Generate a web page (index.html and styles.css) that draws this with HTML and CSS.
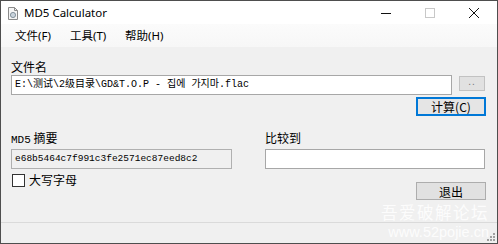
FILE: index.html
```html
<!DOCTYPE html>
<html lang="zh-CN">
<head>
<meta charset="utf-8">
<title>MD5 Calculator</title>
<link rel="stylesheet" href="styles.css">
</head>
<body>
<div class="window">
  <div class="titlebar">
    <svg class="app-icon" width="12" height="13" viewBox="0 0 12 13">
      <path d="M1.5 0.5h6l3 3v9h-9z" fill="#f4f4f4" stroke="#8a8a8a"/>
      <path d="M7.5 0.5v3h3" fill="none" stroke="#8a8a8a"/>
      <circle cx="6" cy="8" r="2.6" fill="#c9d3dc" stroke="#6f7f8c" stroke-width="0.8"/>
    </svg>
    <span class="title">MD5 Calculator</span>
    <div class="controls">
      <span class="ctl"><svg width="10" height="10" viewBox="0 0 10 10"><path d="M0 5.5h10" stroke="#111" stroke-width="1"/></svg></span>
      <span class="ctl"><svg width="10" height="10" viewBox="0 0 10 10"><rect x="0.5" y="0.5" width="9" height="9" fill="none" stroke="#c8c8c8"/></svg></span>
      <span class="ctl"><svg width="10" height="10" viewBox="0 0 10 10"><path d="M0 0L10 10M10 0L0 10" stroke="#111" stroke-width="1"/></svg></span>
    </div>
  </div>
  <div class="menubar">
    <span class="menu-item">文件(F)</span>
    <span class="menu-item">工具(T)</span>
    <span class="menu-item">帮助(H)</span>
  </div>
  <div class="content">
    <div class="label">文件名</div>
    <div class="file-row">
      <div class="field file-field mono">E:\测试\2级目录\GD&amp;T.O.P - 집에 가지마.flac</div>
      <div class="btn btn-browse">..</div>
    </div>
    <div class="calc-row">
      <div class="btn btn-wide btn-default">计算(C)</div>
    </div>
    <div class="columns">
      <div class="col col-left">
        <div class="label"><span class="mono-label">MD5</span> 摘要</div>
        <div class="field md5-field mono">e68b5464c7f991c3fe2571ec87eed8c2</div>
        <div class="check-row">
          <span class="checkbox"></span>
          <span class="check-label">大写字母</span>
        </div>
      </div>
      <div class="col col-right">
        <div class="label">比较到</div>
        <div class="field compare-field"></div>
        <div class="exit-row">
          <div class="btn btn-wide">退出</div>
        </div>
      </div>
    </div>
  </div>
  <div class="statusbar">
    <svg class="grip" width="9" height="9" viewBox="0 0 9 9">
      <g fill="#a0a0a0">
        <rect x="6" y="0" width="2" height="2"/>
        <rect x="3" y="3" width="2" height="2"/><rect x="6" y="3" width="2" height="2"/>
        <rect x="0" y="6" width="2" height="2"/><rect x="3" y="6" width="2" height="2"/><rect x="6" y="6" width="2" height="2"/>
      </g>
    </svg>
  </div>
  <div class="watermark">
    <div class="wm-cn">吾爱破解论坛</div>
    <div class="wm-url">www.52pojie.cn</div>
  </div>
</div>
</body>
</html>
```
FILE: styles.css
```css
html, body {
  margin: 0;
  padding: 0;
}
body {
  width: 498px;
  height: 244px;
  overflow: hidden;
  font-family: "Noto Sans", "Noto Sans CJK SC", sans-serif;
  font-size: 12px;
  color: #000;
}
.window {
  position: relative;
  box-sizing: border-box;
  width: 498px;
  height: 244px;
  border: 1px solid #4e4e4e;
  background: #f0f0f0;
  display: flex;
  flex-direction: column;
}
.titlebar {
  height: 23px;
  background: #fff;
  display: flex;
  align-items: center;
  padding-left: 6px;
}
.app-icon {
  margin-top: 1px;
}
.title {
  margin-left: 5px;
  font-size: 11.5px;
  line-height: 14px;
  color: #000;
}
.controls {
  margin-left: auto;
  display: flex;
  height: 100%;
}
.ctl {
  width: 43px;
  display: flex;
  align-items: center;
  justify-content: center;
}
.controls .ctl:nth-child(1) { width: 45px; }
.controls .ctl:nth-child(3) { width: 45px; margin-right: 1px; }
.menubar {
  height: 23px;
  background: linear-gradient(#fbfbfb, #f7f7f7);
  display: flex;
  align-items: center;
  padding-left: 7px;
}
.menu-item {
  box-sizing: border-box;
  width: 55px;
  padding-left: 7px;
  font-size: 11.5px;
  line-height: 16px;
  white-space: nowrap;
}
.content {
  flex: 1;
  padding: 13px 11px 0 10px;
  display: flex;
  flex-direction: column;
}
.label {
  font-family: "Noto Sans CJK SC", sans-serif;
  font-size: 12px;
  line-height: 14px;
  height: 14px;
}
.mono-label {
  font-family: "Liberation Mono", monospace;
  font-size: 11px;
}
.field {
  box-sizing: border-box;
  border: 1px solid #a7a7a7;
  background: #fff;
  height: 20px;
}
.mono {
  font-family: "Liberation Mono", "Noto Sans CJK SC", "Noto Sans CJK KR", monospace;
  font-size: 9.5px;
  line-height: 18px;
  padding-left: 3px;
  white-space: nowrap;
  overflow: hidden;
}
.file-row {
  display: flex;
  align-items: flex-start;
  margin-top: 1px;
}
.file-field {
  width: 441px;
  font-size: 10px;
}
.btn {
  box-sizing: border-box;
  border: 1px solid #adadad;
  background: #e1e1e1;
  display: flex;
  align-items: center;
  justify-content: center;
  font-family: "Noto Sans CJK SC", sans-serif;
  font-size: 12px;
}
.btn-browse {
  width: 26px;
  height: 15px;
  margin-left: 7px;
  margin-top: 1px;
  color: #777;
  font-family: "Liberation Sans", sans-serif;
  font-size: 10px;
  letter-spacing: 1px;
  line-height: 10px;
  align-items: flex-end;
  padding-bottom: 3px;
  border-color: #c2c2c2;
}
.calc-row {
  display: flex;
  justify-content: flex-end;
  margin-top: 2px;
}
.btn-wide {
  width: 70px;
  height: 19px;
  line-height: 17px;
}
.btn-default {
  border: 2px solid #0078d7;
  background: #e5e5e5;
}
.columns {
  display: flex;
  justify-content: space-between;
  margin-top: 15px;
}
.col-left {
  width: 222px;
}
.col-right {
  width: 221px;
}
.col .field {
  margin-top: 4px;
}
.md5-field {
  background: #f0f0f0;
  border-color: #b0b0b0;
  width: 221px;
}
.compare-field {
  width: 220px;
}
.check-row {
  display: flex;
  align-items: center;
  margin-top: 4px;
  padding-left: 1px;
}
.checkbox {
  box-sizing: border-box;
  width: 13px;
  height: 13px;
  border: 1px solid #333;
  background: #fff;
}
.check-label {
  margin-left: 4px;
  font-family: "Noto Sans CJK SC", sans-serif;
  font-size: 12px;
  line-height: 14px;
}
.exit-row {
  display: flex;
  justify-content: flex-end;
  margin-top: 13px;
}
.exit-row .btn-wide {
  height: 18px;
}
.statusbar {
  height: 20px;
  border-top: 1px solid #dadada;
  display: flex;
  justify-content: flex-end;
  align-items: flex-end;
}
.grip {
  margin: 0 1px 1px 0;
}
.watermark {
  position: absolute;
  right: 8px;
  bottom: 2px;
  color: rgba(255, 255, 255, 0.85);
  text-align: right;
  pointer-events: none;
}
.wm-cn {
  font-family: "Noto Sans CJK SC", sans-serif;
  font-size: 16.5px;
  line-height: 23px;
  letter-spacing: 1.5px;
}
.wm-url {
  font-family: "Liberation Sans", sans-serif;
  font-size: 14.5px;
  line-height: 17px;
}
```
